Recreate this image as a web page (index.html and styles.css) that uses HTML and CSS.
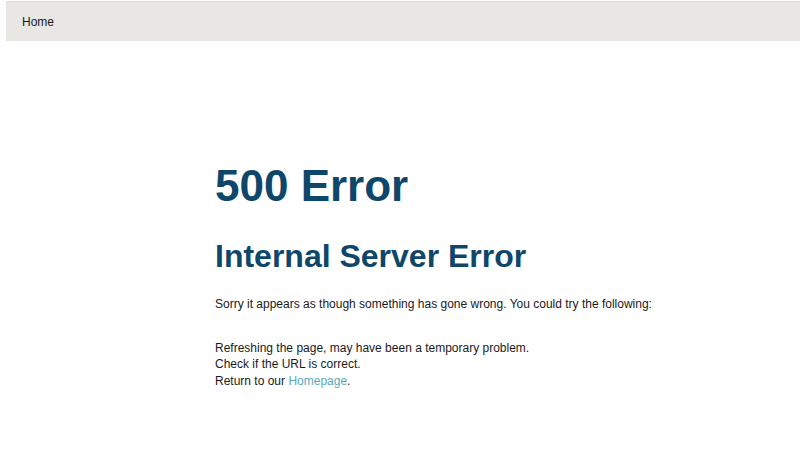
FILE: index.html
```html
<!DOCTYPE html>
<html lang="en">
<head>
<meta charset="utf-8">
<title>500 Error</title>
<link rel="stylesheet" href="styles.css">
</head>
<body>
<nav class="navbar">
  <a class="nav-link" href="#">Home</a>
</nav>
<main class="content">
  <h1 class="title">500 Error</h1>
  <h2 class="subtitle">Internal Server Error</h2>
  <p class="text intro">Sorry it appears as though something has gone wrong. You could try the following:</p>
  <p class="text list">Refreshing the page, may have been a temporary problem.<br>Check if the URL is correct.<br>Return to our <a class="link" href="#">Homepage</a>.</p>
</main>
</body>
</html>
```

FILE: styles.css
```css
html, body {
  margin: 0;
  padding: 0;
  background: #ffffff;
}
body {
  font-family: "Liberation Sans", Arial, sans-serif;
  color: #1a1a1a;
}
.navbar {
  margin: 1px 0 0 6px;
  height: 39px;
  background: #e8e7e4;
  border-top: 1px solid #dddbd7;
  display: flex;
  align-items: center;
  padding-left: 16px;
}
.nav-link {
  font-size: 12px;
  color: #1a1a1a;
  text-decoration: none;
}
.content {
  padding-left: 215px;
}
.title {
  margin: 119.5px 0 0 0;
  font-size: 44px;
  line-height: 50px;
  font-weight: bold;
  color: #0e4769;
}
.subtitle {
  margin: 27.5px 0 0 0;
  font-size: 32px;
  line-height: 37px;
  font-weight: bold;
  color: #0e4769;
}
.text {
  font-size: 12px;
  line-height: 16.7px;
  margin: 0;
}
.intro {
  margin-top: 21px;
}
.list {
  margin-top: 26.8px;
}
.link {
  color: #5aa9bb;
  text-decoration: none;
}
```
